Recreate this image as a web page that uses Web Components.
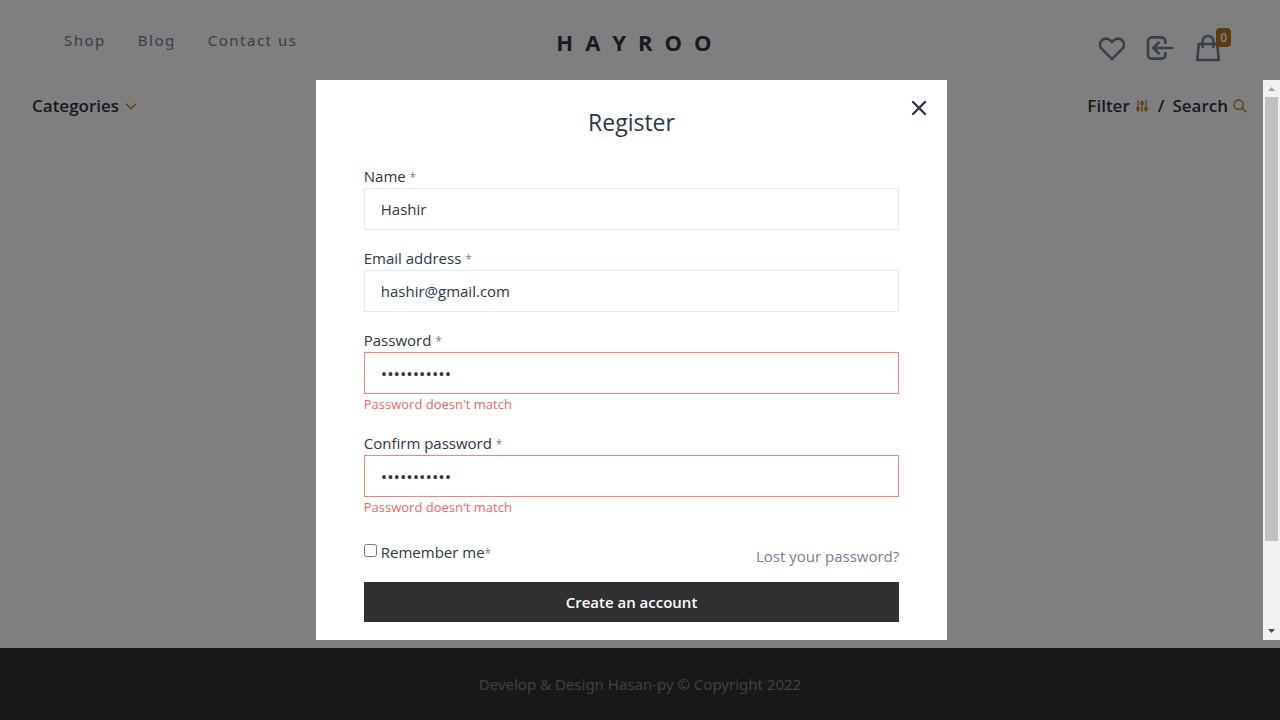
<!DOCTYPE html>
<html lang="en">
<head>
<meta charset="utf-8">
<meta name="viewport" content="width=device-width, initial-scale=1">
<title>Hayroo</title>
<style>
  html { --gray-800: #2d3748; --gray-600: #718096; --gold: #b7791f; --ink: #303031; }
  body { margin: 0; background: #fff; color: var(--gray-800); font: 15px/24px "Open Sans", "Noto Sans", sans-serif; }
</style>
</head>
<body>
<hayroo-app></hayroo-app>

<script>
const define = (name, html, setup) => {
  const template = document.createElement("template");
  template.innerHTML = html;
  customElements.define(name, class extends HTMLElement {
    constructor() {
      super();
      this.attachShadow({ mode: "open" }).append(template.content.cloneNode(true));
    }
    connectedCallback() {
      if (setup) setup(this, this.shadowRoot);
    }
  });
};

/* Outline icons on a 24-unit grid */
const ICONS = {
  heart: "M4.318 6.318a4.5 4.5 0 000 6.364L12 20.364l7.682-7.682a4.5 4.5 0 00-6.364-6.364L12 7.636l-1.318-1.318a4.5 4.5 0 00-6.364 0z",
  login: "M11 16l-4-4m0 0l4-4m-4 4h14m-5 4v1a3 3 0 01-3 3H6a3 3 0 01-3-3V7a3 3 0 013-3h7a3 3 0 013 3v1",
  bag: "M16 11V7a4 4 0 00-8 0v4M5 9h14l1 12H4L5 9z",
  chevron: "M19 9l-7 7-7-7",
  sliders: "M12 6V4m0 2a2 2 0 100 4m0-4a2 2 0 110 4m-6 8a2 2 0 100-4m0 4a2 2 0 110-4m0 4v2m0-6V4m6 6v10m6-2a2 2 0 100-4m0 4a2 2 0 110-4m0 4v2m0-6V4",
  search: "M21 21l-6-6m2-5a7 7 0 11-14 0 7 7 0 0114 0z",
  close: "M6 6l12 12M18 6L6 18"
};
define("h-icon", `
  <style>
    :host { display: block; width: 16px; height: 16px; flex: none; }
    svg { display: block; width: 100%; height: 100%; fill: none; stroke: currentColor; stroke-width: 2; stroke-linecap: round; stroke-linejoin: round; }
    :host([name=close]) svg { stroke-width: 2.4; }
  </style>
  <svg viewBox="0 0 24 24" aria-hidden="true"><path/></svg>`,
  (el, root) => root.querySelector("path").setAttribute("d", ICONS[el.getAttribute("name")]));

define("site-header", `
  <style>
    :host { display: grid; grid-template-columns: 1fr auto 1fr; align-items: start; padding: 28px 56px 16px 64px; }
    nav { display: flex; gap: 32px; font-family: "Noto Sans", sans-serif; }
    a { color: var(--gray-600); text-decoration: none; letter-spacing: .1em; }
    .logo { margin-left: -8px; color: var(--gray-800); font-size: 22px; line-height: 28px; font-weight: 700; letter-spacing: 12px; }
    .actions { display: flex; gap: 16px; justify-content: flex-end; padding-top: 4px; }
    button { position: relative; padding: 0; border: 0; background: none; color: var(--gray-600); }
    h-icon { width: 32px; height: 32px; }
    .badge { position: absolute; top: -4px; right: -7px; padding: 0 4px; border-radius: 4px; background: var(--gold); color: #fff; font: 600 12px/19px "Open Sans", sans-serif; }
  </style>
  <nav><a href="#">Shop</a><a href="#">Blog</a><a href="#">Contact us</a></nav>
  <a class="logo" href="#">HAYROO</a>
  <div class="actions">
    <button type="button" aria-label="Wishlist"><h-icon name="heart"></h-icon></button>
    <button type="button" aria-label="Log in"><h-icon name="login"></h-icon></button>
    <button type="button" aria-label="Cart"><h-icon name="bag"></h-icon><span class="badge">0</span></button>
  </div>`);

define("shop-toolbar", `
  <style>
    :host { display: flex; justify-content: space-between; padding: 12px 32px; }
    div { display: flex; align-items: center; gap: 8px; }
    button { display: flex; align-items: center; gap: 4px; padding: 0; border: 0; background: none; color: var(--gray-800); font: 600 17px/28px "Open Sans", sans-serif; }
    span { font-size: 17px; font-weight: 600; }
    h-icon { color: var(--gold); }
  </style>
  <button type="button">Categories<h-icon name="chevron"></h-icon></button>
  <div>
    <button type="button">Filter<h-icon name="sliders"></h-icon></button>
    <span>/</span>
    <button type="button">Search<h-icon name="search"></h-icon></button>
  </div>`);

define("site-footer", `
  <style>
    :host { display: block; padding: 24px; background: var(--ink); color: #808080; font-family: "Noto Sans", sans-serif; text-align: center; }
  </style>
  <slot></slot>`);

define("form-field", `
  <style>
    :host { display: block; }
    label { display: block; line-height: 24px; }
    small { color: var(--gray-600); font-size: 12px; line-height: 1; }
    input { display: block; box-sizing: border-box; width: 100%; height: 42px; padding: 0 16px; border: 1px solid #e2e8f0; border-radius: 0; outline: 0; background: #fff; color: inherit; font: inherit; }
    input[type=password] { font-size: 17px; }
    p { margin: 0; color: #f56565; font-size: 13px; line-height: 21px; }
    p:empty { display: none; }
    :host([error]) input { border-color: #fc8181; }
  </style>
  <label for="control"><span></span> <small>*</small></label>
  <input id="control" aria-describedby="message">
  <p id="message"></p>`,
  (el, root) => {
    const input = root.querySelector("input");
    root.querySelector("span").textContent = el.getAttribute("label");
    input.type = el.getAttribute("type") || "text";
    input.value = el.getAttribute("value") || "";
    root.querySelector("p").textContent = el.getAttribute("error") || "";
  });

define("register-form", `
  <style>
    :host { display: block; position: relative; box-sizing: border-box; min-height: 100%; padding: 24px 48px 64px; background: #fff; }
    h2 { margin: 0 0 24px; font-size: 23px; line-height: 36px; font-weight: 400; text-align: center; }
    .close { position: absolute; top: 16px; right: 16px; padding: 0; border: 0; background: none; color: var(--gray-800); }
    .close h-icon { width: 24px; height: 24px; }
    form { display: grid; gap: 16px; }
    .row { display: flex; justify-content: space-between; height: 36px; }
    label { display: flex; align-items: center; gap: 4px; }
    label small { color: var(--gray-600); font-size: 12px; line-height: 1; }
    input { width: 13px; height: 13px; margin: 0 0 4px; }
    a { align-self: flex-end; color: var(--gray-600); text-decoration: none; line-height: 28px; }
    .submit { height: 40px; margin-top: -4px; padding: 0; border: 0; background: var(--ink); color: #fff; font: 600 15px/24px "Open Sans", sans-serif; }
  </style>
  <button class="close" type="button" aria-label="Close"><h-icon name="close"></h-icon></button>
  <h2>Register</h2>
  <form>
    <form-field label="Name" value="Hashir"></form-field>
    <form-field label="Email address" value="hashir@gmail.com"></form-field>
    <form-field label="Password" type="password" value="hashir12345" error="Password doesn't match"></form-field>
    <form-field label="Confirm password" type="password" value="hashir54321" error="Password doesn't match"></form-field>
    <div class="row">
      <label for="remember"><input id="remember" type="checkbox"><span>Remember me<small>*</small></span></label>
      <a href="#">Lost your password?</a>
    </div>
    <button class="submit" type="button">Create an account</button>
  </form>`);

define("scroll-bar", `
  <style>
    :host { display: grid; grid-template-rows: 17px 1fr 17px; width: 17px; background: #f1f1f1; }
    svg { display: block; width: 17px; height: 17px; }
    .track { display: grid; grid-template-rows: 444fr 82fr; padding: 0 2px; }
    .thumb { background: #c1c1c1; }
  </style>
  <svg viewBox="0 0 17 17"><path d="M5 11h7L8.5 7z" fill="#a3a3a3"/></svg>
  <div class="track"><div class="thumb"></div></div>
  <svg viewBox="0 0 17 17"><path d="M5 6h7l-3.500 4z" fill="#505050"/></svg>`);

define("modal-layer", `
  <style>
    :host { position: fixed; inset: 0; display: flex; box-sizing: border-box; padding: 80px 0; background: rgba(0, 0, 0, .5); }
    .view { flex: 1; overflow-y: auto; scrollbar-width: none; }
    .panel { width: 50%; min-height: 100%; margin: 0 auto; }
  </style>
  <div class="view"><div class="panel"><slot></slot></div></div>
  <scroll-bar aria-hidden="true"></scroll-bar>`);

define("hayroo-app", `
  <style>
    :host { display: flex; flex-direction: column; min-height: 100vh; }
    main { flex: 1; }
  </style>
  <site-header></site-header>
  <main><shop-toolbar></shop-toolbar></main>
  <site-footer>Develop &amp; Design Hasan-py © Copyright 2022</site-footer>
  <modal-layer role="dialog" aria-label="Register"><register-form></register-form></modal-layer>`);
</script>
</body>
</html>
